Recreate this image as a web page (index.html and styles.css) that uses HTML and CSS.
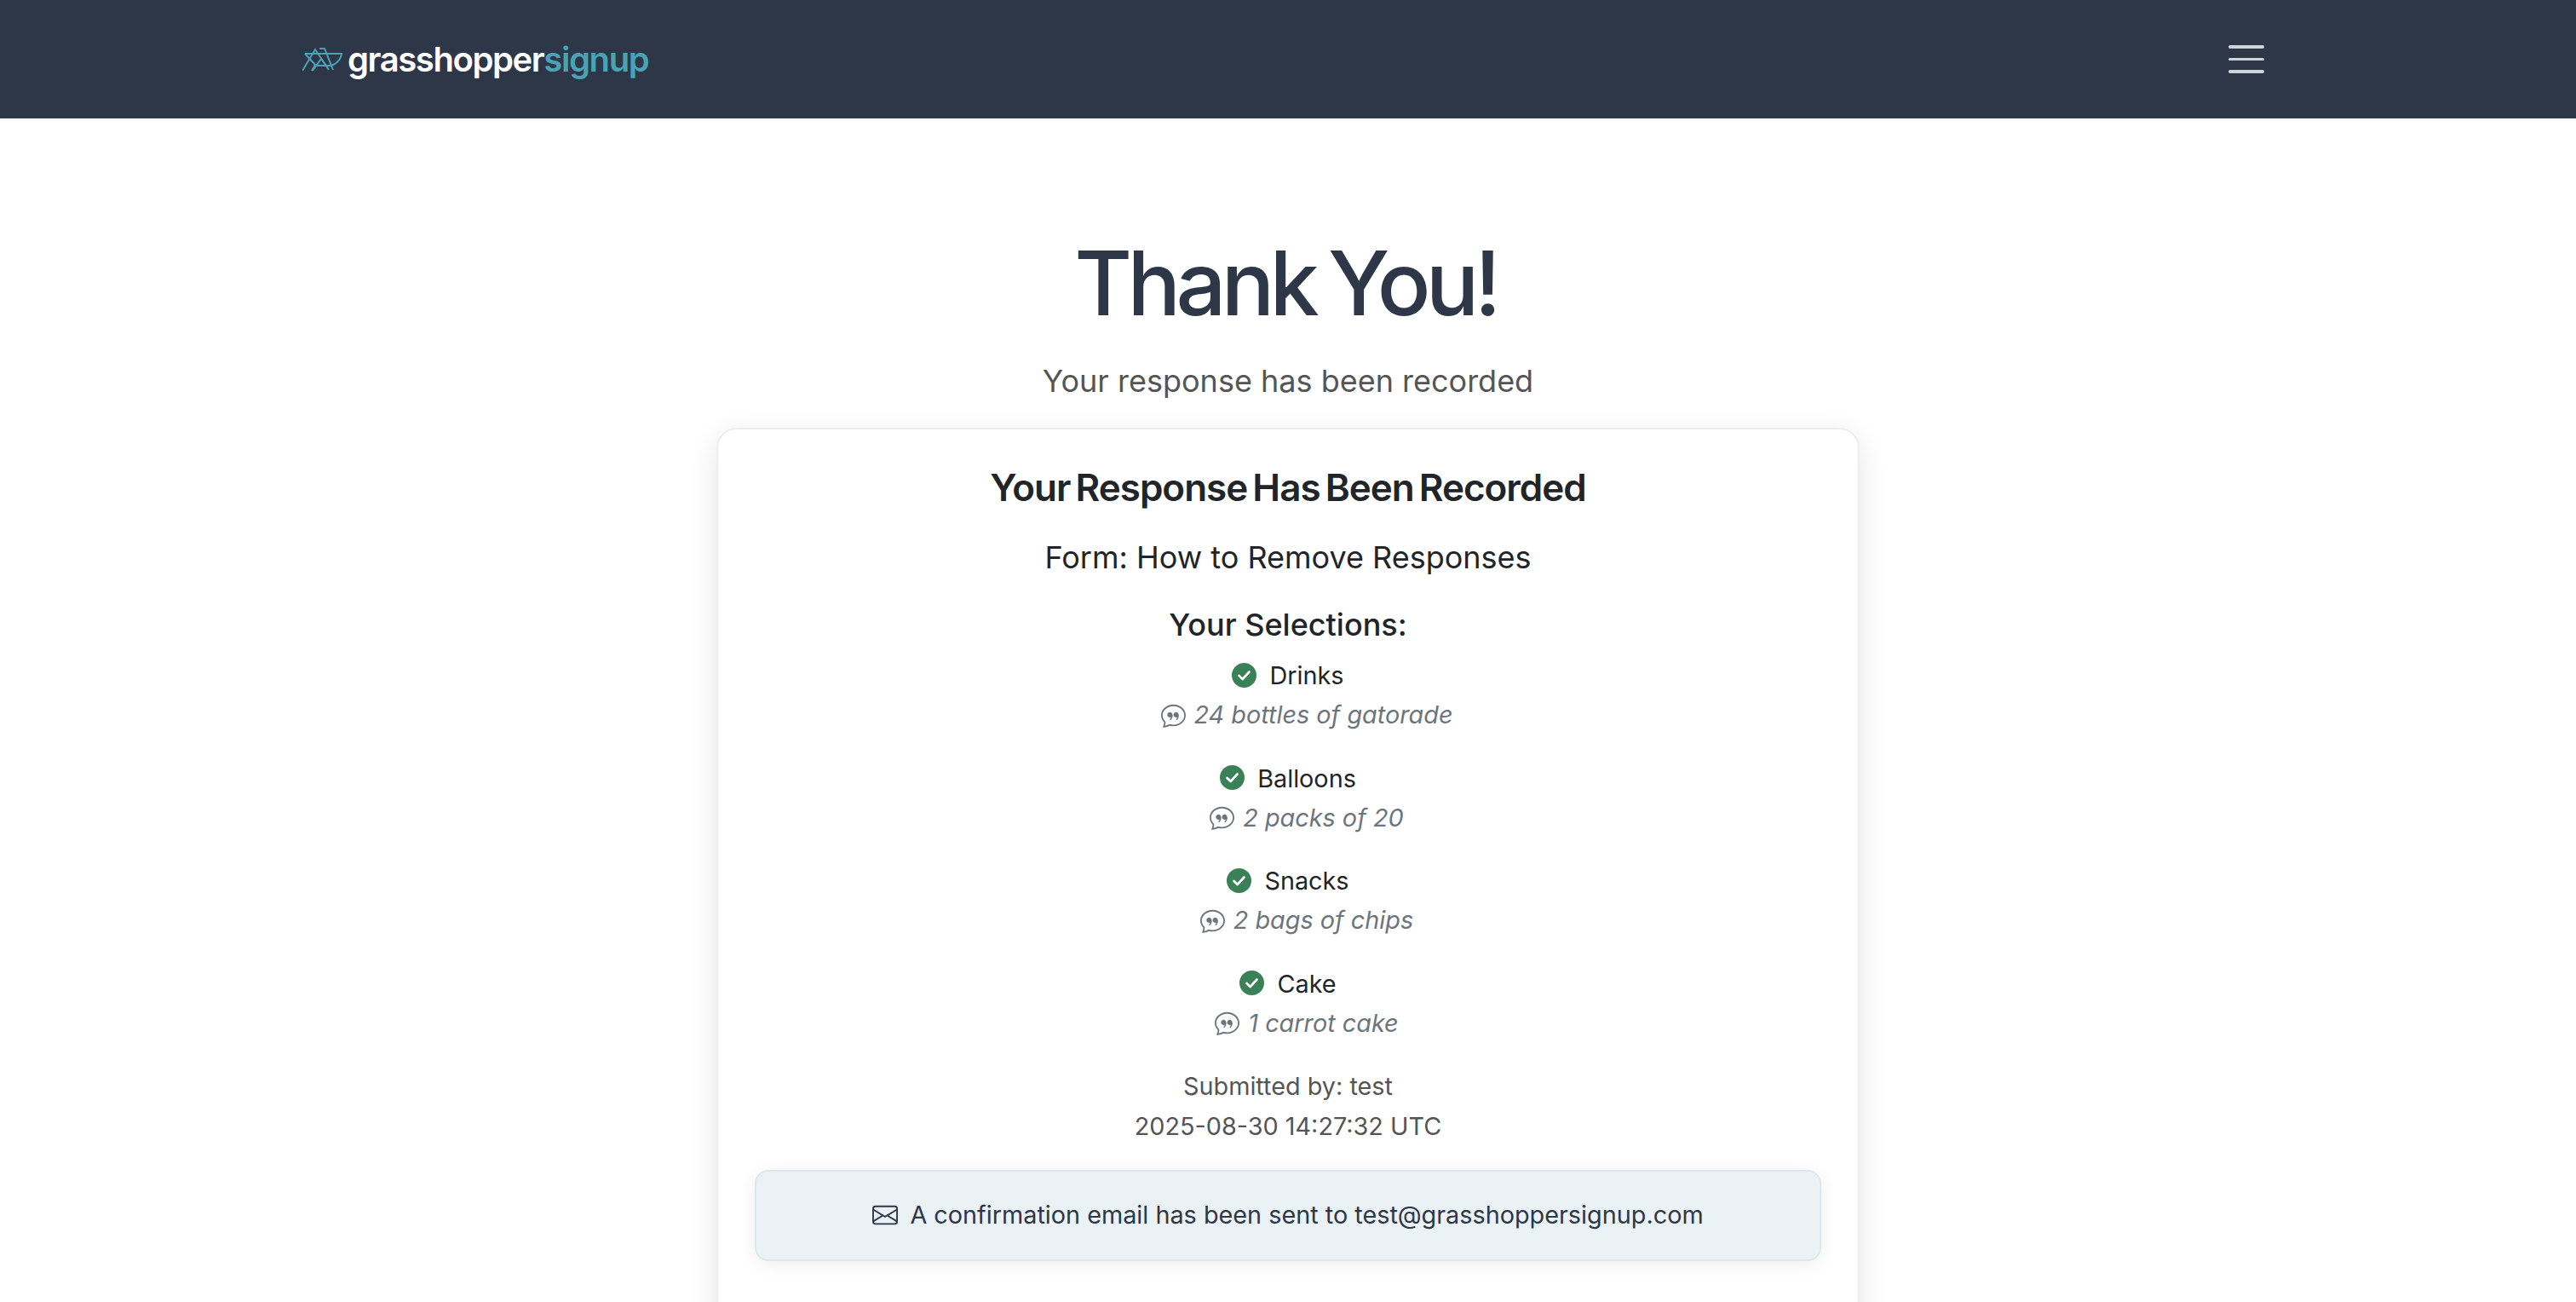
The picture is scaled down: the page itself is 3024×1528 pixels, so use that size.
FILE: index.html
```html
<!DOCTYPE html>
<html lang="en">

<head>
    <meta charset="UTF-8">
    <meta name="viewport" content="width=device-width, initial-scale=1.0">
    <title>Thank You - Grasshopper Signup</title>
    <link rel="stylesheet" href="styles.css">
</head>

<body>

    <!-- Top navigation -->
    <nav class="navbar">
        <a class="brand" href="#">
            <svg class="brand-icon" viewBox="0 0 48 28" fill="none" stroke="#4aa3b5" stroke-width="2">
                <path d="M3 7H46C45 15 38 21 31 21H16"/>
                <path d="M0 27L15 2L31 26"/>
                <path d="M3 7L15 20L11 27"/>
                <path d="M12 27L22 13L28 21"/>
                <path d="M20 1H26L36 26"/>
            </svg>
            <span class="brand-text">grasshopper<span class="brand-accent">signup</span></span>
        </a>
        <button class="menu-toggle" aria-label="Toggle navigation">
            <span></span>
            <span></span>
            <span></span>
        </button>
    </nav>

    <main class="content">
        <h1 class="page-title">Thank You!</h1>
        <p class="page-lead">Your response has been recorded</p>

        <section class="card">
            <h2 class="card-title">Your Response Has Been Recorded</h2>
            <h3 class="form-name">Form: How to Remove Responses</h3>
            <h4 class="selections-title">Your Selections:</h4>

            <div class="selection">
                <div class="selection-name">
                    <svg class="icon-check" viewBox="0 0 16 16"><circle cx="8" cy="8" r="8" fill="#3b8158"/><path d="M4.7 8.3L7 10.5L11.3 5.8" fill="none" stroke="#fff" stroke-width="1.5" stroke-linecap="round" stroke-linejoin="round"/></svg>
                    Drinks
                </div>
                <div class="selection-note">
                    <svg class="icon-quote" viewBox="0 0 16 16"><use href="#quote"/></svg>
                    24 bottles of gatorade
                </div>
            </div>

            <div class="selection">
                <div class="selection-name">
                    <svg class="icon-check" viewBox="0 0 16 16"><circle cx="8" cy="8" r="8" fill="#3b8158"/><path d="M4.7 8.3L7 10.5L11.3 5.8" fill="none" stroke="#fff" stroke-width="1.5" stroke-linecap="round" stroke-linejoin="round"/></svg>
                    Balloons
                </div>
                <div class="selection-note">
                    <svg class="icon-quote" viewBox="0 0 16 16"><use href="#quote"/></svg>
                    2 packs of 20
                </div>
            </div>

            <div class="selection">
                <div class="selection-name">
                    <svg class="icon-check" viewBox="0 0 16 16"><circle cx="8" cy="8" r="8" fill="#3b8158"/><path d="M4.7 8.3L7 10.5L11.3 5.8" fill="none" stroke="#fff" stroke-width="1.5" stroke-linecap="round" stroke-linejoin="round"/></svg>
                    Snacks
                </div>
                <div class="selection-note">
                    <svg class="icon-quote" viewBox="0 0 16 16"><use href="#quote"/></svg>
                    2 bags of chips
                </div>
            </div>

            <div class="selection">
                <div class="selection-name">
                    <svg class="icon-check" viewBox="0 0 16 16"><circle cx="8" cy="8" r="8" fill="#3b8158"/><path d="M4.7 8.3L7 10.5L11.3 5.8" fill="none" stroke="#fff" stroke-width="1.5" stroke-linecap="round" stroke-linejoin="round"/></svg>
                    Cake
                </div>
                <div class="selection-note">
                    <svg class="icon-quote" viewBox="0 0 16 16"><use href="#quote"/></svg>
                    1 carrot cake
                </div>
            </div>

            <div class="submitted">
                <div>Submitted by: test</div>
                <div>2025-08-30 14:27:32 UTC</div>
            </div>

            <div class="notice">
                <svg class="icon-mail" viewBox="0 0 16 16" fill="#2d3748"><path d="M0 4a2 2 0 0 1 2-2h12a2 2 0 0 1 2 2v8a2 2 0 0 1-2 2H2a2 2 0 0 1-2-2V4Zm2-1a1 1 0 0 0-1 1v.217l7 4.2 7-4.2V4a1 1 0 0 0-1-1H2Zm13 2.383-4.708 2.825L15 11.105V5.383Zm-.034 6.876-5.64-3.471L8 9.583l-1.326-.795-5.64 3.47A1 1 0 0 0 2 13h12a1 1 0 0 0 .966-.741ZM1 11.105l4.708-2.897L1 5.383v5.722Z"/></svg>
                A confirmation email has been sent to test@grasshoppersignup.com
            </div>
        </section>
    </main>

    <!-- shared icon -->
    <svg class="icon-defs" aria-hidden="true">
        <symbol id="quote" viewBox="0 0 16 16">
            <path fill="#6c757d" d="M2.678 11.894a1 1 0 0 1 .287.801 10.97 10.97 0 0 1-.398 2c1.395-.323 2.247-.697 2.634-.893a1 1 0 0 1 .71-.074A8.06 8.06 0 0 0 8 14c3.996 0 7-2.807 7-6 0-3.192-3.004-6-7-6S1 4.808 1 8c0 1.468.617 2.83 1.678 3.894Zm-.493 3.905a21.682 21.682 0 0 1-.713.129c-.2.032-.352-.176-.273-.362a9.68 9.68 0 0 0 .244-.637l.003-.01c.248-.72.45-1.548.524-2.319C.743 11.37 0 9.76 0 8c0-3.866 3.582-7 8-7s8 3.134 8 7-3.582 7-8 7a9.06 9.06 0 0 1-2.347-.306c-.52.263-1.639.742-3.468 1.105Z"/>
            <path fill="#6c757d" d="M7.066 6.76A1.665 1.665 0 0 0 4 7.668a1.667 1.667 0 0 0 2.561 1.406c-.131.389-.375.804-.777 1.22a.417.417 0 0 0 .6.58c1.486-1.54 1.293-3.214.682-4.112Zm4 0A1.665 1.665 0 0 0 8 7.668a1.667 1.667 0 0 0 2.561 1.406c-.131.389-.375.804-.777 1.22a.417.417 0 0 0 .6.58c1.486-1.54 1.293-3.214.682-4.112Z"/>
        </symbol>
    </svg>

</body>

</html>
```

FILE: styles.css
```css
html,
body {
    height: 100vh;
    overflow: hidden;
}

body {
    margin: 0;
    font-family: Inter, "Liberation Sans", sans-serif;
    font-size: 28.8px;
    line-height: 1.6;
    color: #212529;
    background-color: #fff;
}

.navbar {
    height: 139px;
    box-sizing: border-box;
    padding: 0 366px 0 355px;
    display: flex;
    align-items: center;
    justify-content: space-between;
    background-color: #2d3748;
}

.brand {
    display: flex;
    align-items: center;
    gap: 5px;
    text-decoration: none;
}

.brand-icon {
    width: 48px;
    height: 28px;
}

.brand-text {
    font-family: Inter, sans-serif;
    font-size: 40px;
    font-weight: 600;
    letter-spacing: -1.4px;
    color: #fff;
}

.brand-accent {
    color: #4aa3b5;
}

.menu-toggle {
    width: 42px;
    padding: 0;
    display: flex;
    flex-direction: column;
    gap: 11px;
    background: none;
    border: none;
}

.menu-toggle span {
    height: 3.5px;
    border-radius: 2px;
    background-color: #d0d3d9;
}

.content {
    padding-top: 131px;
    display: flex;
    flex-direction: column;
    align-items: center;
    text-align: center;
}

.page-title {
    margin: 0 0 0 -6px;
    font-size: 104px;
    font-weight: 450;
    line-height: 1.2;
    letter-spacing: -5.7px;
    word-spacing: -6px;
    color: #2d3748;
}

.page-lead {
    margin: 25px 0 0;
    font-size: 36px;
    line-height: 1.5;
    color: #555;
}

.card {
    width: 1342px;
    height: 1200px;
    margin-top: 28px;
    box-sizing: border-box;
    padding: 42px 43px;
    background-color: #fff;
    border: 2px solid #eee;
    border-radius: 24px;
    box-shadow: 0 8px 32px rgba(0, 0, 0, 0.1);
}

.card-title {
    margin: 0;
    font-size: 44px;
    font-weight: 600;
    line-height: 1.2;
    letter-spacing: -1px;
    word-spacing: -4px;
}

.form-name {
    margin: 34px 0 0;
    font-size: 36px;
    font-weight: 400;
    line-height: 1.2;
}

.selections-title {
    margin: 36px 0 0;
    font-size: 36px;
    font-weight: 500;
    line-height: 1.2;
}

.selection {
    margin-bottom: 28.5px;
}

.selection-name {
    margin-top: 15px;
    display: flex;
    align-items: center;
    justify-content: center;
    gap: 15px;
}

.selection + .selection .selection-name {
    margin-top: 0;
}

.selection-note {
    padding-left: 44px;
    display: flex;
    align-items: center;
    justify-content: center;
    gap: 10px;
    font-style: italic;
    color: #6c757d;
}

.icon-check {
    width: 29px;
    height: 29px;
    margin-bottom: 2px;
}

.icon-quote {
    width: 29px;
    height: 29px;
}

.icon-defs {
    display: none;
}

.submitted {
    margin-top: 1px;
    color: #555;
}

.notice {
    height: 107px;
    margin-top: 28px;
    box-sizing: border-box;
    display: flex;
    align-items: center;
    justify-content: center;
    gap: 14px;
    color: #2d3748;
    background-color: #eaf2f5;
    border: 2px solid #dce8ee;
    border-radius: 16px;
    box-shadow: 0 4px 20px rgba(0, 0, 0, 0.07);
}

.icon-mail {
    width: 30px;
    height: 30px;
}
```
